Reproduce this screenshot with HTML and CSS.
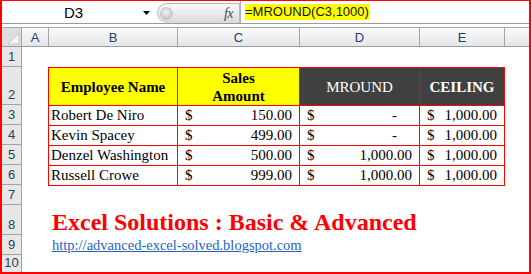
FILE: index.html
```html
<!DOCTYPE html>
<html>
<head>
<meta charset="utf-8">
<link rel="stylesheet" href="styles.css">
</head>
<body>
<div class="frame">
  <div class="fbar">
    <div class="namebox">
      <span class="nb-text">D3</span>
      <svg class="nb-arrow" width="7" height="4" viewBox="0 0 7 4"><path d="M0 0H7L3.5 4Z" fill="#000"/></svg>
    </div>
    <div class="pill">
      <span class="knob"></span>
      <span class="fx">fx</span>
    </div>
    <div class="formula"><span class="hl">=MROUND(C3,1000)</span></div>
  </div>

  <div class="sheet">
    <div class="colheads">
      <div class="corner">
        <svg width="13" height="13" viewBox="0 0 13 13"><path d="M12 1V12H1Z" fill="#f4f4f4" stroke="#c8c8c8" stroke-width="1"/></svg>
      </div>
      <div class="ch">A</div>
      <div class="ch">B</div>
      <div class="ch">C</div>
      <div class="ch">D</div>
      <div class="ch">E</div>
      <div class="ch last"></div>
    </div>
    <div class="body">
      <div class="rowheads">
        <div class="rh h20">1</div>
        <div class="rh h38">2</div>
        <div class="rh h20">3</div>
        <div class="rh h20">4</div>
        <div class="rh h20">5</div>
        <div class="rh h20">6</div>
        <div class="rh h20">7</div>
        <div class="rh h30">8</div>
        <div class="rh h20">9</div>
        <div class="rh hlast">10</div>
      </div>
      <div class="cells">
        <div class="tbl">
          <div class="th yellow">Employee Name</div>
          <div class="th yellow">Sales<br>Amount</div>
          <div class="th dark">MROUND</div>
          <div class="th dark bold">CEILING</div>

          <div class="td name">Robert De Niro</div>
          <div class="td acc"><span>$</span><span>150.00</span></div>
          <div class="td acc"><span>$</span><span class="dash">-</span></div>
          <div class="td acc"><span>$</span><span>1,000.00</span></div>

          <div class="td name">Kevin Spacey</div>
          <div class="td acc"><span>$</span><span>499.00</span></div>
          <div class="td acc"><span>$</span><span class="dash">-</span></div>
          <div class="td acc"><span>$</span><span>1,000.00</span></div>

          <div class="td name">Denzel Washington</div>
          <div class="td acc"><span>$</span><span>500.00</span></div>
          <div class="td acc"><span>$</span><span>1,000.00</span></div>
          <div class="td acc"><span>$</span><span>1,000.00</span></div>

          <div class="td name">Russell Crowe</div>
          <div class="td acc"><span>$</span><span>999.00</span></div>
          <div class="td acc"><span>$</span><span>1,000.00</span></div>
          <div class="td acc"><span>$</span><span>1,000.00</span></div>
        </div>
        <div class="title">Excel Solutions : Basic &amp; Advanced</div>
        <div class="link"><a href="#">http://advanced-excel-solved.blogspot.com</a></div>
      </div>
    </div>
  </div>
</div>
</body>
</html>
```

FILE: styles.css
```css
* { box-sizing: border-box; }
html, body { margin: 0; padding: 0; background: #fff; }

.frame {
  width: 531px;
  height: 274px;
  border: 2px solid #ff0000;
  border-top-width: 1px;
  display: flex;
  flex-direction: column;
  overflow: hidden;
  background: #fff;
}

/* formula bar */
.fbar {
  height: 23px;
  flex: none;
  display: flex;
  align-items: stretch;
  border-bottom: 1px solid #9a9a9a;
  font-family: "Liberation Sans", Arial, sans-serif;
}
.namebox {
  width: 155px;
  position: relative;
  display: flex;
  align-items: center;
  justify-content: center;
}
.nb-text {
  font-size: 15px;
  color: #000;
  margin-left: 24px;
  margin-right: 36px;
}
.nb-arrow {
  position: absolute;
  left: 141px;
  top: 10px;
}
.pill {
  width: 83px;
  margin-top: 2px;
  border: 1px solid #b9b9b9;
  border-bottom: none;
  border-top-left-radius: 10px;
  border-bottom-left-radius: 10px;
  background: linear-gradient(#fbfbfb, #d9d9d9);
  display: flex;
  align-items: center;
  justify-content: space-between;
  padding: 0 6px 0 2px;
}
.knob {
  width: 13px;
  height: 13px;
  border-radius: 50%;
  background: radial-gradient(circle at 45% 40%, #f2f2f2 0, #d2d2d2 55%, #b5b5b5 100%);
  border: 1px solid #c4c4c4;
}
.fx {
  font-family: "Liberation Serif", serif;
  font-style: italic;
  font-size: 14px;
  color: #4a4a4a;
  letter-spacing: -0.5px;
}
.formula {
  flex: 1;
  border-left: 1px solid #b0b0b0;
  padding-left: 4px;
  display: flex;
  align-items: center;
}
.hl {
  background: #ffff00;
  font-size: 13px;
  color: #111;
  padding: 2px 1px 2px 0;
  line-height: 12px;
}

/* sheet */
.sheet {
  margin-top: 3px;
  flex: 1;
  display: flex;
  flex-direction: column;
}
.colheads {
  height: 20px;
  flex: none;
  display: grid;
  grid-template-columns: 20px 27px 129px 122px 120px 85px 1fr;
  border-top: 1px solid #a9a9a9;
  border-bottom: 1px solid #9c9c9c;
  background: linear-gradient(#f9fafb, #e4e6e9);
  font-family: "Liberation Sans", Arial, sans-serif;
  font-size: 13px;
  color: #253f5f;
}
.ch, .corner {
  border-right: 1px solid #a3a3a3;
  display: flex;
  align-items: center;
  justify-content: center;
}
.ch.last { border-right: none; }
.corner {
  background: #dedede;
  align-items: flex-end;
  justify-content: flex-end;
  padding: 0 1px 1px 0;
}
.corner svg { display: block; }

.body {
  flex: 1;
  display: flex;
}
.rowheads {
  width: 20px;
  flex: none;
  display: flex;
  flex-direction: column;
  background: #e7e7e7;
  border-right: 1px solid #a3a3a3;
  font-family: "Liberation Sans", Arial, sans-serif;
  font-size: 13px;
  color: #253f5f;
}
.rh {
  border-bottom: 1px solid #a3a3a3;
  display: flex;
  align-items: flex-end;
  justify-content: center;
  padding-bottom: 1px;
  line-height: 16px;
}
.h20 { height: 20px; }
.h38 { height: 38px; }
.h30 { height: 30px; }
.hlast { flex: 1; border-bottom: none; }

.cells {
  flex: 1;
  display: grid;
  grid-template-columns: 27px 129px 122px 120px 85px 1fr;
  grid-template-rows: 20px 38px 20px 20px 20px 20px 20px 30px 20px 1fr;
  font-family: "Liberation Serif", "Times New Roman", serif;
  font-size: 15px;
  color: #000;
}

.tbl {
  grid-column: 2 / 6;
  grid-row: 2 / 7;
  align-self: start;
  justify-self: start;
  width: 457px;
  display: grid;
  grid-template-columns: 128px 121px 119px 84px;
  grid-template-rows: 37px 19px 19px 19px 19px;
  gap: 1px;
  padding: 1px;
  background: #ff0000;
  margin-left: -1px;
}
.th {
  display: flex;
  align-items: center;
  justify-content: center;
  text-align: center;
  line-height: 18px;
  font-family: "Liberation Serif", "Times New Roman", serif;
  font-weight: bold;
}
.yellow { background: #ffff00; color: #000; }
.dark { background: #404040; color: #fff; font-weight: normal; }
.dark.bold { font-weight: bold; }
.td {
  background: #fff;
  line-height: 19px;
  white-space: nowrap;
}
.name { padding-left: 2px; }
.acc {
  display: flex;
  justify-content: space-between;
  padding: 0 7px 0 7px;
}
.dash { margin-right: 15px; }

.title {
  grid-column: 2 / 7;
  grid-row: 8;
  display: flex;
  align-items: flex-end;
  padding-left: 3px;
  font-size: 24px;
  line-height: 26px;
  font-weight: bold;
  color: #ff0000;
  white-space: nowrap;
}
.link {
  grid-column: 2 / 7;
  grid-row: 9;
  display: flex;
  align-items: flex-end;
  padding-left: 3px;
  font-size: 14.5px;
  line-height: 19px;
  white-space: nowrap;
}
.link a {
  color: #1f62c6;
  text-decoration: underline;
}
```
